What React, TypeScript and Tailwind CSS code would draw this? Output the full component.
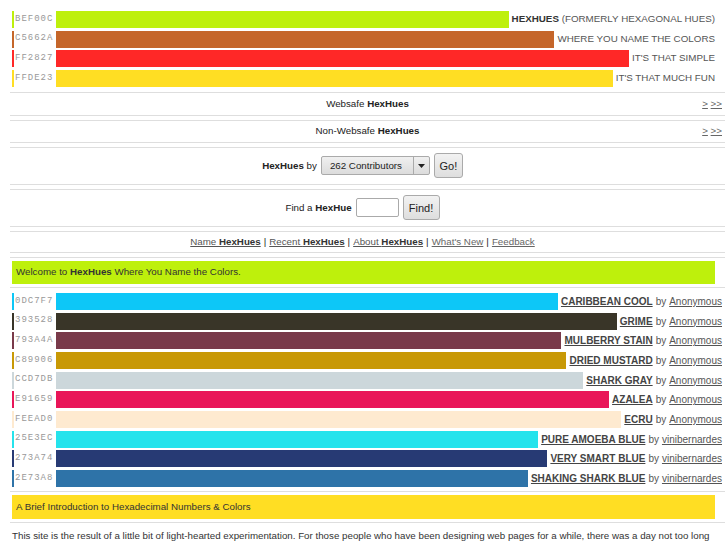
import React from "react";

const top = [
  { hex: "BEF00C", label: <><b className="font-bold text-[#333]">HEXHUES</b> (FORMERLY HEXAGONAL HUES)</> },
  { hex: "C5662A", label: <>WHERE YOU NAME THE COLORS</> },
  { hex: "FF2827", label: <>IT'S THAT SIMPLE</> },
  { hex: "FFDE23", label: <>IT'S THAT MUCH FUN</> },
];

const hues = [
  ["0DC7F7", "CARIBBEAN COOL", "Anonymous"],
  ["393528", "GRIME", "Anonymous"],
  ["793A4A", "MULBERRY STAIN", "Anonymous"],
  ["C89906", "DRIED MUSTARD", "Anonymous"],
  ["CCD7DB", "SHARK GRAY", "Anonymous"],
  ["E91659", "AZALEA", "Anonymous"],
  ["FEEAD0", "ECRU", "Anonymous"],
  ["25E3EC", "PURE AMOEBA BLUE", "vinibernardes"],
  ["273A74", "VERY SMART BLUE", "vinibernardes"],
  ["2E73A8", "SHAKING SHARK BLUE", "vinibernardes"],
];

function HexCell({ hex }: { hex: string }) {
  return (
    <div
      className="w-[44px] shrink-0 border-l-2 pl-[1px] flex items-center font-['Liberation_Mono',monospace] text-[9px] tracking-[1px] text-[#999]"
      style={{ borderLeftColor: "#" + hex }}
    >
      {hex}
    </div>
  );
}

export default function App() {
  return (
    <div className="bg-white h-[545px] overflow-hidden font-['Liberation_Sans',Arial,sans-serif] text-[9.75px] text-[#444] pl-[10px] pr-[2px] pt-[11px]">
      {/* top rows */}
      <div className="flex flex-col gap-[2.67px] pl-[2px] pr-[10px] pb-[5px] border-b border-[#dedede]">
        {top.map((r) => (
          <div key={r.hex} className="flex h-[17px]">
            <HexCell hex={r.hex} />
            <div className="flex-1" style={{ background: "#" + r.hex }} />
            <div className="pl-[3px] flex items-center whitespace-nowrap text-[#555] text-[9.8px]">
              <span>{r.label}</span>
            </div>
          </div>
        ))}
      </div>

      {/* websafe */}
      <div className="relative h-[23px] flex items-center justify-center border-b border-[#dedede] text-[#222]">
        <span>Websafe <b>HexHues</b></span>
        <span className="absolute right-[3px] text-[#666]"><span className="underline">&gt;</span> <span className="underline">&gt;&gt;</span></span>
      </div>

      <div className="relative mt-[4px] h-[23px] flex items-center justify-center border-y border-[#dedede] text-[#222]">
        <span>Non-Websafe <b>HexHues</b></span>
        <span className="absolute right-[3px] text-[#666]"><span className="underline">&gt;</span> <span className="underline">&gt;&gt;</span></span>
      </div>

      {/* by contributors */}
      <div className="mt-[4px] h-[38px] flex items-center justify-center gap-[4px] pr-[10px] border-y border-[#dedede] text-[#222]">
        <span><b>HexHues</b> by</span>
        <div className="flex h-[19px] w-[109px] border border-[#aaa] rounded-[2px] bg-gradient-to-b from-[#f0f0f0] to-[#dcdcdc] text-[#222]">
          <div className="flex-1 flex items-center pl-[8px]">262 Contributors</div>
          <div className="w-[16px] border-l border-[#aaa] flex items-center justify-center">
            <svg width="7" height="4" viewBox="0 0 7 4"><path d="M0 0h7L3.5 4z" fill="#222" /></svg>
          </div>
        </div>
        <button className="h-[25px] w-[29px] border border-[#aaa] rounded-[3px] bg-gradient-to-b from-[#f2f2f2] to-[#dedede] text-[11px] text-[#222]">Go!</button>
      </div>

      {/* find */}
      <div className="mt-[4px] h-[38px] flex items-center justify-center gap-[4px] pr-[10px] border-y border-[#dedede] text-[#222]">
        <span>Find a <b>HexHue</b></span>
        <div className="h-[19px] w-[43px] border border-[#aaa] rounded-[2px] bg-white" />
        <button className="h-[25px] w-[37px] border border-[#aaa] rounded-[3px] bg-gradient-to-b from-[#f2f2f2] to-[#dedede] text-[11px] text-[#222]">Find!</button>
      </div>

      {/* nav */}
      <div className="mt-[4px] h-[22px] flex items-center justify-center pr-[10px] border-y border-[#dedede] text-[#555]">
        <span className="underline">Name <b className="text-[#333]">HexHues</b></span>
        <span className="text-[#222] mx-[3px]">|</span>
        <span className="underline">Recent <b className="text-[#333]">HexHues</b></span>
        <span className="text-[#222] mx-[3px]">|</span>
        <span className="underline">About <b className="text-[#333]">HexHues</b></span>
        <span className="text-[#222] mx-[3px]">|</span>
        <span className="underline text-[#666]">What's New</span>
        <span className="text-[#222] mx-[3px]">|</span>
        <span className="underline text-[#666]">Feedback</span>
      </div>

      {/* welcome */}
      <div className="mt-[4px] border-y border-[#dedede] py-[3px] pl-[2px] pr-[10px]">
        <div className="h-[23px] bg-[#BEF00C] flex items-center pl-[4px] text-[#333]">
          <span>Welcome to <b>HexHues</b> Where You Name the Colors.</span>
        </div>
      </div>

      {/* hues */}
      <div className="flex flex-col gap-[2.67px] pl-[2px] pr-[3px] pt-[5px] pb-[4px] border-b border-[#dedede]">
        {hues.map(([hex, name, by]) => (
          <div key={hex} className="flex h-[17px]">
            <HexCell hex={hex} />
            <div className="flex-1" style={{ background: "#" + hex }} />
            <div className="pl-[3px] flex items-center whitespace-nowrap text-[#555] text-[10px]">
              <b className="underline text-[#444]">{name}</b>
              <span className="ml-[3px]">by</span>
              <span className="ml-[3px] underline">{by}</span>
            </div>
          </div>
        ))}
      </div>

      {/* intro */}
      <div className="border-b border-[#dedede] py-[3px] pl-[2px] pr-[10px]">
        <div className="h-[24px] bg-[#FFDE23] flex items-center pl-[4px] text-[#333]">
          A Brief Introduction to Hexadecimal Numbers &amp; Colors
        </div>
      </div>

      <p className="pl-[2px] pt-[6px] text-[#333] leading-[14px] whitespace-nowrap">
        This site is the result of a little bit of light-hearted experimentation. For those people who have been designing web pages for a while, there was a day not too long
      </p>
    </div>
  );
}
